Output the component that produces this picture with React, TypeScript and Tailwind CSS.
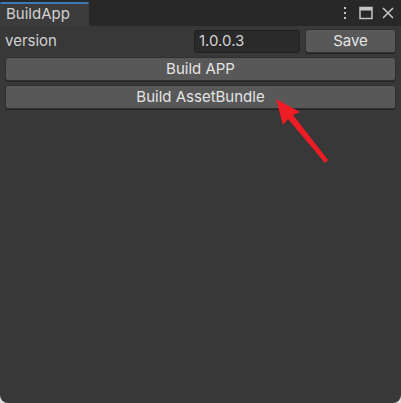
import React from "react";

const font = { fontFamily: "Inter, 'Noto Sans', sans-serif" };

function UnityButton({ children, className = "" }: { children: React.ReactNode; className?: string }) {
  return (
    <div
      className={`flex h-[24px] items-center justify-center rounded-[3px] border border-[#303030] bg-[#585858] text-[15px] text-[#e4e4e4] shadow-[0_1px_0_#242424] ${className}`}
    >
      {children}
    </div>
  );
}

export default function App() {
  return (
    <div className="h-[403px] w-[401px] bg-[#dcdcdc]" style={font}>
      <div className="relative flex h-full w-full flex-col overflow-hidden rounded-b-[8px] bg-[#383838]">
        {/* Tab bar */}
        <div className="flex h-[26px] shrink-0 items-end bg-[#282828]">
          <div className="relative flex h-[23px] w-[89px] items-center rounded-t-[3px] bg-[#3c3c3c] pl-[6px] text-[15px] text-[#d2d2d2]">
            <div className="absolute left-0 right-0 top-[-1px] h-[2px] rounded-t-[3px] bg-[#3a79bb]" />
            BuildApp
          </div>
          <div className="ml-auto flex h-[26px] items-center gap-[6px] pr-[6px]">
            <svg width="6" height="14" viewBox="0 0 6 14">
              <rect x="2" y="1" width="2" height="2" fill="#c4c4c4" />
              <rect x="2" y="6" width="2" height="2" fill="#c4c4c4" />
              <rect x="2" y="11" width="2" height="2" fill="#c4c4c4" />
            </svg>
            <svg width="14" height="14" viewBox="0 0 14 14" className="ml-[5px]">
              <rect x="1" y="1.5" width="12" height="11" fill="none" stroke="#c4c4c4" strokeWidth="1.5" />
              <rect x="1" y="1.5" width="12" height="3" fill="#c4c4c4" />
            </svg>
            <svg width="14" height="14" viewBox="0 0 14 14" className="ml-[2px]">
              <path d="M2 2 L12 12 M12 2 L2 12" stroke="#c4c4c4" strokeWidth="1.6" />
            </svg>
          </div>
        </div>

        {/* Content */}
        <div className="flex flex-col px-[5px] pt-[3px]">
          <div className="flex h-[24px] items-center">
            <span className="text-[15px] text-[#d2d2d2]">version</span>
            <div className="ml-auto flex h-[23px] w-[106px] items-center rounded-[3px] border border-[#212121] bg-[#2a2a2a] pl-[4px] text-[15px] text-[#d2d2d2]">
              1.0.0.3
            </div>
            <UnityButton className="ml-[5px] w-[91px]">Save</UnityButton>
          </div>
          <UnityButton className="mt-[4px]">Build APP</UnityButton>
          <UnityButton className="mt-[4px]">Build AssetBundle</UnityButton>
        </div>

        {/* Annotation arrow */}
        <svg className="pointer-events-none absolute left-0 top-0" width="401" height="403">
          <polygon
            points="276,99 300,112 293,115 328,160 325,163 288,119 283,125"
            fill="#ee1c24"
          />
        </svg>
      </div>
    </div>
  );
}
